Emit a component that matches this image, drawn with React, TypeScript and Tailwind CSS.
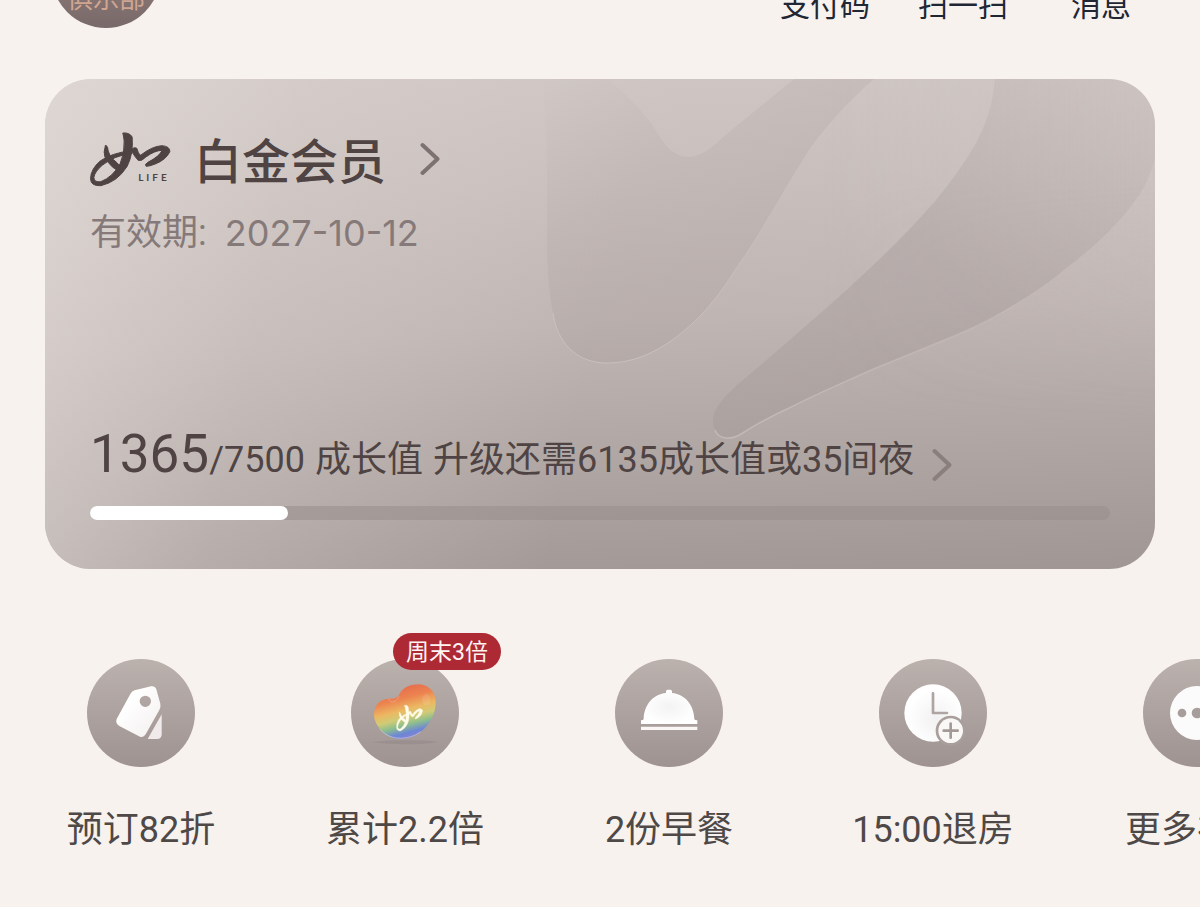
import { type ReactNode } from "react";

const member = {
  level: "白金会员",
  expires: "2027-10-12",
  growth: 1365,
  target: 7500,
  progress: 19.4,
};

const navItems = ["支付码", "扫一扫", "消息"];

// Brush style brand mark, shared by the card and the bean icon
const BrandStrokes = () => (
  <>
    <path d="M128 38Q148 36 156 50Q160 100 141 138Q112 185 62 196Q32 198 31 175Q32 146 60 122Q95 98 152 91L154 99Q100 107 66 135Q43 155 41 172Q43 187 62 184Q98 170 120 130Q134 98 132 62Q131 50 128 38Z" />
    <path d="M76 74Q84 78 84 92Q87 105 100 118Q113 128 119 138L111 150Q95 141 84 126Q71 110 72 95Z" />
    <path d="M150 92Q160 78 170 84Q174 100 181 105Q215 78 245 76Q270 78 269 94Q258 118 225 131Q208 138 198 138Q192 132 203 126Q238 108 246 90Q225 90 197 110Q184 124 174 120Q163 108 158 98Z" />
  </>
);

const BrandLogo = () => (
  <svg viewBox="30 35 242 165" className="h-[55px] w-[81px] shrink-0" fill="#4f4443" role="img" aria-label="如LIFE">
    <g stroke="#4f4443" strokeWidth="3" strokeLinejoin="round">
      <BrandStrokes />
    </g>
    <text x="174" y="183" fontSize="30" fontWeight="700" letterSpacing="9" fontFamily="Lato, sans-serif">LIFE</text>
  </svg>
);

const Chevron = ({ className }: { className: string }) => (
  <svg viewBox="0 0 20 34" className={className} fill="none" stroke="currentColor" strokeWidth="4" strokeLinecap="round" strokeLinejoin="round" aria-hidden="true">
    <path d="M2.5 3L17.5 17L2.5 31" />
  </svg>
);

const CardPetals = () => (
  <svg viewBox="0 0 1110 490" preserveAspectRatio="xMaxYMin slice" className="absolute inset-0 h-full w-full" aria-hidden="true">
    <defs>
      <linearGradient id="petalFill" x1="0" y1="0" x2="0.5" y2="0.6">
        <stop offset="0" stopColor="#8a7e7c" stopOpacity="0" />
        <stop offset="0.6" stopColor="#8a7e7c" stopOpacity="0.1" />
        <stop offset="1" stopColor="#8a7e7c" stopOpacity="0.13" />
      </linearGradient>
      <linearGradient id="petalFillWide" x1="0.9" y1="0" x2="0.1" y2="1">
        <stop offset="0" stopColor="#8f8480" stopOpacity="0.07" />
        <stop offset="0.5" stopColor="#84797a" stopOpacity="0.2" />
        <stop offset="1" stopColor="#84797a" stopOpacity="0.15" />
      </linearGradient>
      <linearGradient id="petalEdge" x1="0" y1="0" x2="0" y2="1">
        <stop offset="0.2" stopColor="#e8dfdc" stopOpacity="0" />
        <stop offset="1" stopColor="#e8dfdc" stopOpacity="0.35" />
      </linearGradient>
    </defs>
    <path
      fill="url(#petalFill)"
      d="M497 0L562 0C578 12 592 26 605 43C615 56 623 78 644 78C660 77 670 65 683 54L749 0L829 0C806 20 785 42 766 68C740 108 718 152 692 188C677 212 664 229 648 244C628 262 600 284 562 284C530 284 512 262 508 234C501 200 502 160 502 120C502 80 502 40 497 0Z"
    />
    <path fill="none" stroke="url(#petalEdge)" strokeWidth="1" d="M829 0C806 20 785 42 766 68C740 108 718 152 692 188C677 212 664 229 648 244C628 262 600 284 562 284C530 284 512 262 508 234" />
    <path
      fill="url(#petalFillWide)"
      d="M950 0C948 24 942 44 930 66C918 86 905 104 891 121C860 157 820 195 779 231L718 284C704 296 690 307 679 319C669 330 665 341 670 351C674 361 686 361 696 355C712 345 726 337 744 329C775 313 800 303 826 291C850 281 868 274 887 266C915 255 940 244 961 231C983 218 1002 206 1017 193C1036 178 1052 165 1065 151C1080 136 1091 122 1099 108C1104 98 1108 88 1110 78L1110 0Z"
    />
    <path
      fill="none"
      stroke="url(#petalEdge)"
      strokeWidth="1.5"
      d="M670 351C674 361 686 361 696 355C712 345 726 337 744 329C775 313 800 303 826 291C850 281 868 274 887 266C915 255 940 244 961 231C983 218 1002 206 1017 193C1036 178 1052 165 1065 151C1080 136 1091 122 1099 108"
    />
  </svg>
);

const TagIcon = () => (
  <svg viewBox="0 0 324 324" className="size-full" aria-hidden="true">
    <defs>
      <linearGradient id="tagFill" x1="0" y1="0" x2="1" y2="1">
        <stop offset="0.3" stopColor="#ffffff" />
        <stop offset="1" stopColor="#f3efee" />
      </linearGradient>
    </defs>
    <path
      fill="url(#tagFill)"
      fillRule="evenodd"
      d="M143 94L192 82Q204 80 208 91L220 134Q222 144 217 153L176 226Q170 236 159 233L97 201Q84 192 89 180L130 105Q135 96 143 94ZM175 110A17 17 0 1 0 175 144A17 17 0 1 0 175 110Z"
    />
    <path fill="#f0ebea" d="M224 166V226Q224 240 210 240H182Z" />
  </svg>
);

const BeanIcon = () => (
  <svg viewBox="0 0 324 324" className="size-full" aria-hidden="true">
    <defs>
      <linearGradient id="beanFill" x1="0.3" y1="0" x2="0.6" y2="1">
        <stop offset="0" stopColor="#e4654c" />
        <stop offset="0.28" stopColor="#ec8350" />
        <stop offset="0.48" stopColor="#ecb862" />
        <stop offset="0.62" stopColor="#d0cb76" />
        <stop offset="0.74" stopColor="#8fbf8c" />
        <stop offset="0.88" stopColor="#6c86d6" />
        <stop offset="1" stopColor="#8d83cf" />
      </linearGradient>
    </defs>
    <path fill="#857b79" opacity="0.3" d="M62 250Q110 243 165 243T262 248Q220 256 165 256T62 250Z" />
    <path
      fill="url(#beanFill)"
      d="M112 119C124 119 138 119 144 108C152 90 172 76 203 76C234 78 254 98 254 130C254 166 236 198 208 219C188 234 168 240 147 240C112 238 70 206 69 167C69 140 86 120 112 119Z"
    />
    <path fill="none" stroke="#f0b0a0" strokeWidth="2" strokeLinecap="round" opacity="0.8" d="M113 120C116 133 136 133 144 112" />
    <path fill="none" stroke="#e9e6f2" strokeWidth="3" strokeLinecap="round" opacity="0.45" d="M86 210C115 245 170 246 208 219" />
    <ellipse cx="226" cy="122" rx="13" ry="17" fill="#ffffff" opacity="0.1" />
    <g fill="#fffbe8" stroke="#fffbe8" strokeWidth="3" transform="translate(112 130) rotate(-10) scale(0.36 0.46)">
      <BrandStrokes />
    </g>
  </svg>
);

const BreakfastIcon = () => (
  <svg viewBox="0 0 324 324" className="size-full" aria-hidden="true">
    <defs>
      <radialGradient id="domeFill">
        <stop offset="0" stopColor="#f4f3f3" />
        <stop offset="1" stopColor="#ffffff" />
      </radialGradient>
    </defs>
    <path
      fill="url(#domeFill)"
      d="M153 102V97Q153 92 158 92H166Q171 92 171 97V102C212 106 237 140 238 180Q238 184 247 184V195H78V184Q86 184 86 180C87 140 112 106 153 102Z"
    />
    <path fill="#faf7f6" d="M78 203H247V213H78Z" />
  </svg>
);

const CheckoutIcon = () => (
  <svg viewBox="0 0 324 324" className="size-full" aria-hidden="true">
    <defs>
      <radialGradient id="clockFill" cx="0.55" cy="0.6">
        <stop offset="0" stopColor="#f2f1f1" />
        <stop offset="1" stopColor="#ffffff" />
      </radialGradient>
    </defs>
    <circle cx="162" cy="162" r="86" fill="url(#clockFill)" />
    <path d="M162 103V162H204" fill="none" stroke="#aea4a2" strokeWidth="8" strokeLinecap="round" strokeLinejoin="round" />
    <circle cx="215" cy="215" r="45" fill="#a89e9c" />
    <circle cx="215" cy="215" r="37" fill="#faf8f7" />
    <path d="M215 194V236M194 215H236" fill="none" stroke="#a39997" strokeWidth="8" strokeLinecap="round" />
  </svg>
);

const MoreIcon = () => (
  <svg viewBox="0 0 324 324" className="size-full" aria-hidden="true">
    <circle cx="162" cy="162" r="81" fill="#fcfbfb" />
    <g fill="#a79d9b">
      <circle cx="117" cy="162" r="13" />
      <circle cx="162" cy="162" r="16" />
      <circle cx="207" cy="162" r="13" />
    </g>
  </svg>
);

type BenefitProps = { label: string; icon: ReactNode; badge?: string };

const benefits: BenefitProps[] = [
  { label: "预订82折", icon: <TagIcon /> },
  { label: "累计2.2倍", icon: <BeanIcon />, badge: "周末3倍" },
  { label: "2份早餐", icon: <BreakfastIcon /> },
  { label: "15:00退房", icon: <CheckoutIcon /> },
  { label: "更多礼遇", icon: <MoreIcon /> },
];

const Benefit = ({ label, icon, badge }: BenefitProps) => (
  <li className="w-[264px] shrink-0">
    <button type="button" className="flex w-full flex-col items-center gap-[39px]">
      <span className="relative size-[108px] rounded-full bg-linear-to-b from-[#bbb1ad] to-[#9e9391]">
        {icon}
        {badge && (
          <span className="absolute -top-[26px] left-[42px] flex h-[37px] w-[108px] items-center justify-center rounded-full bg-[#ad2a35] pt-[3px] text-[23px] whitespace-nowrap text-[#fff5f3]">
            {badge}
          </span>
        )}
      </span>
      <span className="text-[36px] leading-[48px] whitespace-nowrap text-[#4e4847]">{label}</span>
    </button>
  </li>
);

const TopBar = () => (
  <header className="flex h-7 items-end justify-between overflow-hidden pr-[30px] pl-[51px]">
    <a href="#club" className="flex size-[110px] shrink-0 items-end justify-center rounded-full bg-linear-to-b from-[#a38c80] to-[#78696a] pb-[14px] text-[26px] leading-[30px] text-[#d0a692]">
      俱乐部
    </a>
    <nav className="flex">
      {navItems.map((item) => (
        <a key={item} href="#nav" className="w-[138px] pb-[6px] text-center text-[30px] leading-[32px] text-[#1f2735]">
          {item}
        </a>
      ))}
    </nav>
  </header>
);

const MemberCard = () => (
  <section className="relative mx-[45px] mt-[51px] overflow-hidden rounded-[46px] bg-linear-[177deg,#d0c8c4_0%,#c9c0bd_24%,#bfb5b2_50%,#afa6a3_76%,#a09794_100%] text-[#4f4443]">
    <div className="absolute inset-0 bg-linear-[102deg,#e6dfdba0_0%,#e0d7d448_22%,#e0d7d400_50%]" />
    <div className="absolute inset-0 bg-linear-to-l from-[#e0d7d430] to-[#e0d7d400] to-30% mask-b-from-20% mask-b-to-70%" />
    <CardPetals />
    <div className="relative flex min-h-[490px] flex-col justify-between px-[45px] pt-[52px] pb-[49px]">
      <div>
        <a href="#level" className="flex h-[56px] items-center">
          <BrandLogo />
          <h1 className="ml-[23px] pt-2 text-[48px] leading-[56px] font-medium">{member.level}</h1>
          <Chevron className="ml-[34px] h-[34px] w-5 text-[#7d7271]" />
        </a>
        <p className="mt-[22px] flex gap-[18px] text-[36px] leading-[48px] text-[#857a79]">
          <span>有效期:</span>
          <time className="font-['Inter','Noto_Sans_CJK_SC',sans-serif]">{member.expires}</time>
        </p>
      </div>
      <div>
        <a href="#growth" className="flex items-baseline gap-[10px] text-[36px] leading-[60px] whitespace-nowrap">
          <span>
            <span className="text-[53px]">{member.growth}</span>/{member.target}
          </span>
          <span>成长值</span>
          <span>升级还需6135成长值或35间夜</span>
          <Chevron className="mb-2 ml-2 h-[34px] w-5 self-end text-[#8a7f7d]" />
        </a>
        <div
          role="progressbar"
          aria-label="成长值"
          aria-valuenow={member.growth}
          aria-valuemax={member.target}
          className="mt-4 h-[14px] rounded-full bg-[#9a908e]/60"
        >
          <div className="h-full rounded-full bg-white" style={{ width: `${member.progress}%` }} />
        </div>
      </div>
    </div>
  </section>
);

export default function App() {
  return (
    <main className="min-h-screen overflow-hidden bg-[#f7f2ee] font-['Roboto','Noto_Sans_CJK_SC',sans-serif]">
      <TopBar />
      <MemberCard />
      <ul className="mt-[50px] flex overflow-hidden pt-10 pb-12 pl-[9px]">
        {benefits.map((benefit) => (
          <Benefit key={benefit.label} {...benefit} />
        ))}
      </ul>
    </main>
  );
}
